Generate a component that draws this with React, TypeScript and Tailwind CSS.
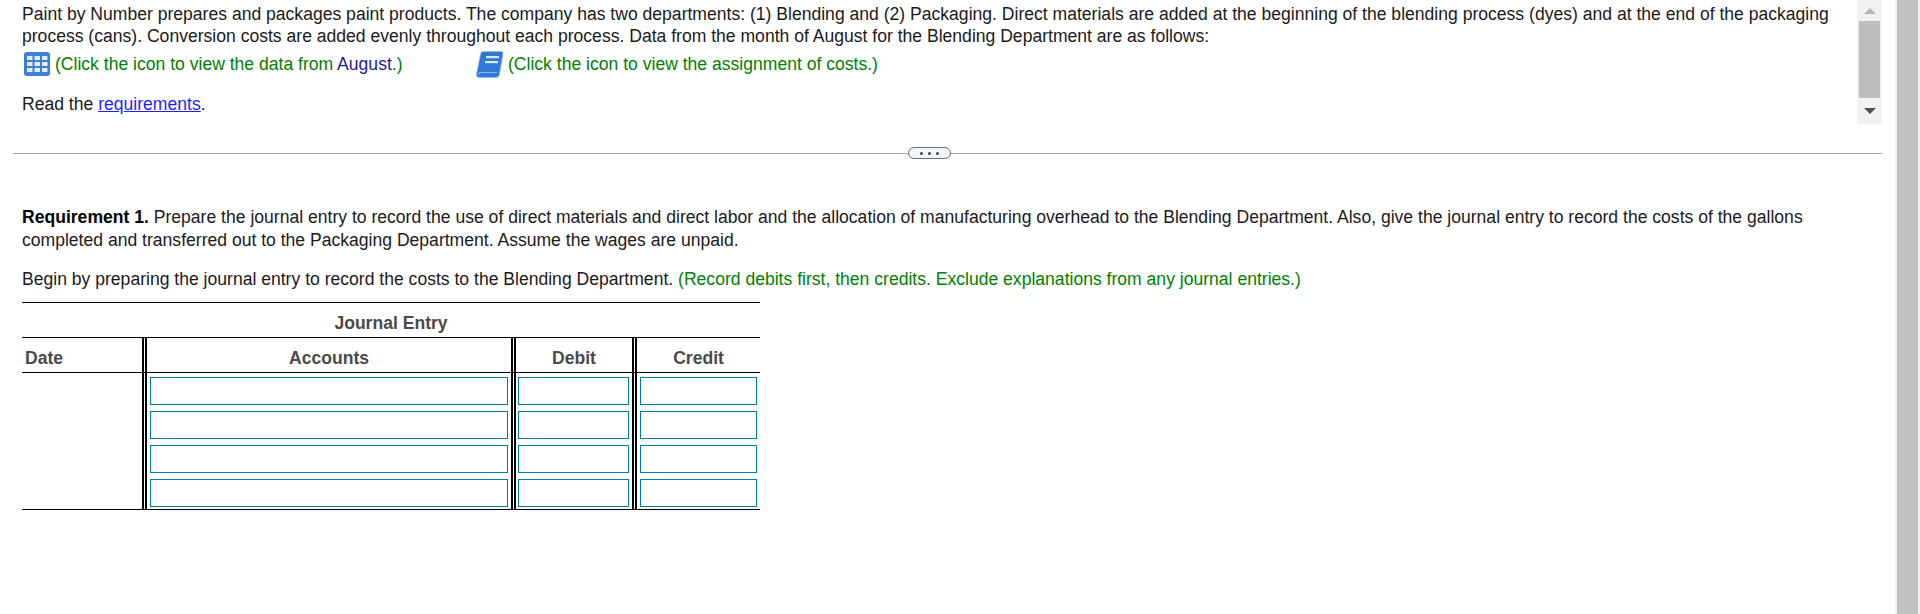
import React from 'react';

const ROWS = [0, 1, 2, 3];

function TableIcon() {
  return (
    <svg width="26" height="24" viewBox="0 0 26 24" className="shrink-0">
      <rect x="0" y="0" width="26" height="24" rx="3" fill="#3b7fdc" />
      {[4, 10, 16].map((y) =>
        [3, 10.5, 18].map((x) => <rect key={`${x}-${y}`} x={x} y={y} width="5.5" height="4" fill="#e4eefb" />)
      )}
    </svg>
  );
}

function BookIcon() {
  return (
    <svg width="28" height="27" viewBox="0 0 28 27" className="shrink-0">
      <path d="M7 0.5 H25.5 Q27.5 0.5 27 3 L23.5 23 Q23 26.5 20 26.5 H3 Q0 26.5 0.5 23 L4.5 3 Q5 0.5 7 0.5 Z" fill="#2f78d8" stroke="#9cc0ee" strokeWidth="0.8" />
      <path d="M2.5 23.5 Q3 21.5 5 21.5 H21" stroke="#8db6ea" strokeWidth="1.2" fill="none" />
      <rect x="10" y="5" width="13" height="2.2" fill="#dbe8fa" />
      <rect x="9" y="10" width="13" height="2.2" fill="#dbe8fa" />
    </svg>
  );
}

function CellInput({ className }: { className: string }) {
  return <input type="text" className={`h-[28px] border border-[#007c9e] bg-white outline-none ${className}`} />;
}

function Scrollbar() {
  return (
    <div className="flex h-[124px] w-[25px] shrink-0 flex-col items-center bg-[#f1f1f1]">
      <div className="flex h-[21px] items-center justify-center">
        <div className="h-0 w-0 border-x-[6px] border-b-[6px] border-x-transparent border-b-[#b5b5b5]" />
      </div>
      <div className="h-[77px] w-[21px] bg-[#bdbdbd]" />
      <div className="flex h-[26px] items-center justify-center">
        <div className="h-0 w-0 border-x-[6px] border-t-[6px] border-x-transparent border-t-[#505050]" />
      </div>
    </div>
  );
}

export default function App() {
  return (
    <div className="flex h-[614px] overflow-hidden bg-white font-['Liberation_Sans',Arial,sans-serif] text-[17.57px] leading-[22px] text-[#1a1a1a]">
      <div className="w-[1895px] shrink-0">
        {/* Scrolling problem statement */}
        <div className="flex h-[124px] pr-[13px]">
          <div className="min-w-0 flex-1 pl-[22px] pr-[20px] pt-[3px]">
            <p>
              Paint by Number prepares and packages paint products. The company has two departments: (1) Blending and (2) Packaging. Direct materials are added at the beginning of the blending process (dyes) and at the end of the packaging process (cans). Conversion costs are added evenly throughout each process. Data from the month of August for the Blending Department are as follows:
            </p>
            <div className="mt-[4px] flex h-[26px] items-center text-[#008000]">
              <div className="flex w-[454px] items-center gap-[5px] pl-[2px]">
                <TableIcon />
                <span>
                  (Click the icon to view the data from <span className="text-[#1c1c8c]">August</span>.)
                </span>
              </div>
              <div className="flex items-center gap-[4px]">
                <BookIcon />
                <span>(Click the icon to view the assignment of costs.)</span>
              </div>
            </div>
            <p className="mt-[16px]">
              Read the <a href="#" className="text-[#1f1fff] underline">requirements</a>.
            </p>
          </div>
          <Scrollbar />
        </div>

        {/* Divider */}
        <div className="ml-[13px] mr-[13px] mt-[23px] flex h-[12px] items-center">
          <div className="h-px w-[895px] bg-[#ad9fa8]" />
          <div className="flex h-[12px] w-[43px] items-center justify-center gap-[5px] rounded-full border border-[#66727f] bg-[#f2f4f6]">
            <span className="h-[3px] w-[3px] rounded-full bg-[#3f4650]" />
            <span className="h-[3px] w-[3px] rounded-full bg-[#3f4650]" />
            <span className="h-[3px] w-[3px] rounded-full bg-[#3f4650]" />
          </div>
          <div className="h-px flex-1 bg-[#ad9fa8]" />
        </div>

        {/* Requirement */}
        <div className="pl-[22px] pr-[60px] pt-[47px]">
          <p className="leading-[23px]">
            <b className="text-black">Requirement 1.</b> Prepare the journal entry to record the use of direct materials and direct labor and the allocation of manufacturing overhead to the Blending Department. Also, give the journal entry to record the costs of the gallons completed and transferred out to the Packaging Department. Assume the wages are unpaid.
          </p>
          <p className="mt-[16px]">
            Begin by preparing the journal entry to record the costs to the Blending Department.{' '}
            <span className="text-[#008000]">(Record debits first, then credits. Exclude explanations from any journal entries.)</span>
          </p>

          {/* Journal table */}
          <div className="mt-[12px] w-[738px] border-y border-black font-bold text-[#4a4a4a]">
            <div className="flex h-[35px] items-center justify-center border-b border-black pt-[6px]">Journal Entry</div>
            <div className="grid h-[35px] grid-cols-[120px_369px_121px_128px] items-stretch border-b border-black">
              <div className="flex items-center pl-[3px] pt-[6px]">Date</div>
              <div className="flex items-center justify-center border-l-[5px] border-double border-black pt-[6px]">Accounts</div>
              <div className="flex items-center justify-center border-l-[5px] border-double border-black pt-[6px]">Debit</div>
              <div className="flex items-center justify-center border-l-[5px] border-double border-black pt-[6px]">Credit</div>
            </div>
            <div className="grid grid-cols-[120px_369px_121px_128px]">
              <div />
              <div className="flex flex-col gap-[6px] border-l-[5px] border-double border-black pb-[2px] pl-[3px] pt-[4px]">
                {ROWS.map((r) => (
                  <CellInput key={r} className="w-[358px]" />
                ))}
              </div>
              <div className="flex flex-col gap-[6px] border-l-[5px] border-double border-black pb-[2px] pl-[2px] pt-[4px]">
                {ROWS.map((r) => (
                  <CellInput key={r} className="w-[111px]" />
                ))}
              </div>
              <div className="flex flex-col gap-[6px] border-l-[5px] border-double border-black pb-[2px] pl-[3px] pt-[4px]">
                {ROWS.map((r) => (
                  <CellInput key={r} className="w-[117px]" />
                ))}
              </div>
            </div>
          </div>
        </div>
      </div>

      {/* Page scrollbar */}
      <div className="flex flex-1 justify-center bg-[#f1f1f1]">
        <div className="h-full w-[21px] bg-[#c1c1c1]" />
      </div>
    </div>
  );
}
